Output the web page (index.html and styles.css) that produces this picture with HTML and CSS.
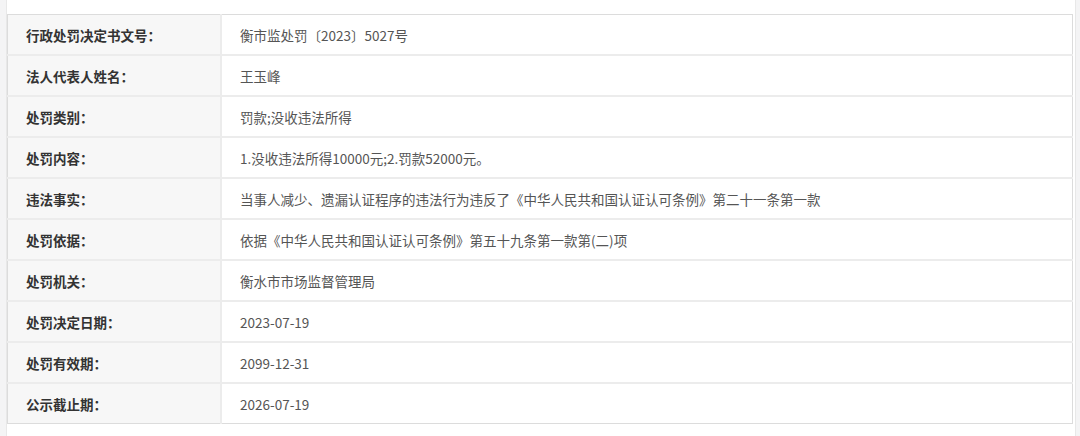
FILE: index.html
```html
<!DOCTYPE html>
<html lang="zh-CN">
<head>
    <meta charset="UTF-8">
    <meta name="viewport" content="width=device-width, initial-scale=1.0">
    <title>行政处罚信息</title>
    <link rel="stylesheet" href="styles.css">
</head>
<body>
    <div class="page">
        <!-- Penalty detail table -->
        <table class="detail-table">
            <tr><th>行政处罚决定书文号：</th><td>衡市监处罚〔2023〕5027号</td></tr>
            <tr><th>法人代表人姓名：</th><td>王玉峰</td></tr>
            <tr><th>处罚类别：</th><td>罚款;没收违法所得</td></tr>
            <tr><th>处罚内容：</th><td>1.没收违法所得10000元;2.罚款52000元。</td></tr>
            <tr><th>违法事实：</th><td>当事人减少、遗漏认证程序的违法行为违反了《中华人民共和国认证认可条例》第二十一条第一款</td></tr>
            <tr><th>处罚依据：</th><td>依据《中华人民共和国认证认可条例》第五十九条第一款第(二)项</td></tr>
            <tr><th>处罚机关：</th><td>衡水市市场监督管理局</td></tr>
            <tr><th>处罚决定日期：</th><td>2023-07-19</td></tr>
            <tr><th>处罚有效期：</th><td>2099-12-31</td></tr>
            <tr><th>公示截止期：</th><td>2026-07-19</td></tr>
        </table>
    </div>
</body>
</html>
```

FILE: styles.css
```css
body {
    margin: 0;
    background-color: #f4f4f5;
    font-family: "Noto Sans CJK SC", "Liberation Sans", sans-serif;
    font-size: 13.5px;
}

.page {
    margin: 0 4px 0 6px;
    height: 436px;
    box-sizing: border-box;
    padding: 14px 2px 0 0;
    background-color: #fff;
    border-left: 1px solid #e8e8e8;
    border-right: 1px solid #e8e8e8;
}

.detail-table {
    width: 100%;
    border-collapse: collapse;
    border: 1px solid #dcdcdc;
}

.detail-table th,
.detail-table td {
    height: 39px;
    padding: 0 18px;
    text-align: left;
    border-bottom: 2px solid #ececec;
}

.detail-table tr:last-child th,
.detail-table tr:last-child td {
    border-bottom: 1px solid #dcdcdc;
}

.detail-table th {
    width: 176px;
    background-color: #f7f7f7;
    color: #333;
    font-weight: bold;
    border-right: 2px solid #ececec;
}

.detail-table td {
    color: #555;
}
```
